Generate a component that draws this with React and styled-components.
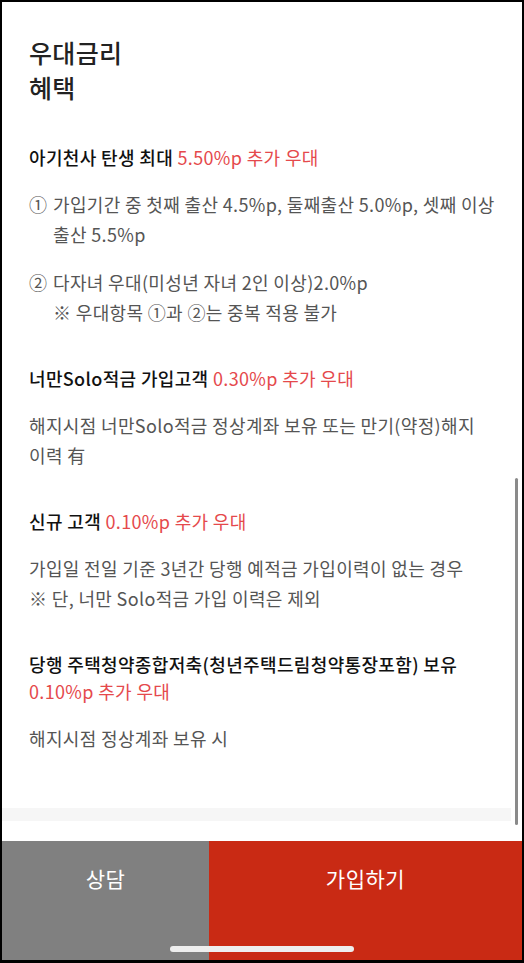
import { createGlobalStyle, styled } from "styled-components";

const GlobalStyle = createGlobalStyle`
  html, body {
    margin: 0;
    padding: 0;
    background: #000;
  }
  body {
    font-family: "Noto Sans CJK KR", "Noto Sans", sans-serif;
  }
`;

const Frame = styled.div`
  box-sizing: border-box;
  width: 524px;
  height: 963px;
  padding: 2px 2px 3px 2px;
  background: #000;
`;

const Screen = styled.div`
  position: relative;
  height: 100%;
  display: flex;
  flex-direction: column;
  background: #fff;
  overflow: hidden;
`;

const Scroll = styled.div`
  flex: 1;
  overflow: hidden;
`;

const Content = styled.div`
  padding: 33px 26px 0 27px;
  letter-spacing: 0.35px;
`;

const Title = styled.h2`
  margin: 0 0 39px;
  font-size: 25px;
  line-height: 35px;
  font-weight: 500;
  color: #222;
`;

const Section = styled.section`
  margin-bottom: 38px;
`;

const Heading = styled.h3`
  margin: 0 0 18px;
  font-size: 18px;
  line-height: 27px;
  font-weight: 500;
  color: #111;
`;

const Accent = styled.span`
  color: #e5494c;
  font-weight: 400;
`;

const Text = styled.p`
  margin: 0;
  font-size: 18px;
  line-height: 30px;
  color: #555;
`;

const Item = styled.div`
  display: flex;
  font-size: 18px;
  line-height: 30px;
  color: #555;
  & + & {
    margin-top: 18px;
  }
`;

const Marker = styled.span`
  flex: 0 0 24px;
`;

const ItemBody = styled.div`
  flex: 1;
`;

const Note = styled.div`
  display: block;
`;

const Divider = styled.div`
  height: 13px;
  margin: 55px 11px 0 0;
  background: #f6f6f6;
`;

const ScrollThumb = styled.div`
  position: absolute;
  right: 4px;
  top: 476px;
  width: 3px;
  height: 347px;
  border-radius: 2px;
  background: #8a8a8a;
`;

const BottomBar = styled.div`
  display: grid;
  grid-template-columns: 207px 1fr;
  height: 119px;
`;

const ActionButton = styled.button`
  border: none;
  margin: 0;
  padding: 22px 0 0;
  display: flex;
  justify-content: center;
  align-items: flex-start;
  font-family: inherit;
  font-size: 21px;
  line-height: 30px;
  letter-spacing: 0.5px;
  font-weight: 400;
  color: #fff;
  background: ${(p) => (p.$primary ? "#c92a14" : "#808080")};
`;

const HomeIndicator = styled.div`
  position: absolute;
  left: 168px;
  bottom: 8px;
  width: 184px;
  height: 6px;
  border-radius: 3px;
  background: #eeeeee;
`;

export default function App() {
  return (
    <>
      <GlobalStyle />
      <Frame>
        <Screen>
          <Scroll>
            <Content>
              <Title>
                우대금리
                <br />
                혜택
              </Title>

              <Section>
                <Heading>
                  아기천사 탄생 최대 <Accent>5.50%p 추가 우대</Accent>
                </Heading>
                <Item>
                  <Marker>①</Marker>
                  <ItemBody>
                    가입기간 중 첫째 출산 4.5%p, 둘째출산 5.0%p, 셋째 이상 출산 5.5%p
                  </ItemBody>
                </Item>
                <Item>
                  <Marker>②</Marker>
                  <ItemBody>
                    다자녀 우대(미성년 자녀 2인 이상)2.0%p
                    <Note>※ 우대항목 ①과 ②는 중복 적용 불가</Note>
                  </ItemBody>
                </Item>
              </Section>

              <Section>
                <Heading>
                  너만Solo적금 가입고객 <Accent>0.30%p 추가 우대</Accent>
                </Heading>
                <Text>해지시점 너만Solo적금 정상계좌 보유 또는 만기(약정)해지 이력 有</Text>
              </Section>

              <Section>
                <Heading>
                  신규 고객 <Accent>0.10%p 추가 우대</Accent>
                </Heading>
                <Text>
                  가입일 전일 기준 3년간 당행 예적금 가입이력이 없는 경우
                  <br />※ 단, 너만 Solo적금 가입 이력은 제외
                </Text>
              </Section>

              <Section>
                <Heading>
                  당행 주택청약종합저축(청년주택드림청약통장포함) 보유 <Accent>0.10%p 추가 우대</Accent>
                </Heading>
                <Text>해지시점 정상계좌 보유 시</Text>
              </Section>
            </Content>
            <Divider />
          </Scroll>

          <BottomBar>
            <ActionButton>상담</ActionButton>
            <ActionButton $primary>가입하기</ActionButton>
          </BottomBar>

          <ScrollThumb />
          <HomeIndicator />
        </Screen>
      </Frame>
    </>
  );
}
